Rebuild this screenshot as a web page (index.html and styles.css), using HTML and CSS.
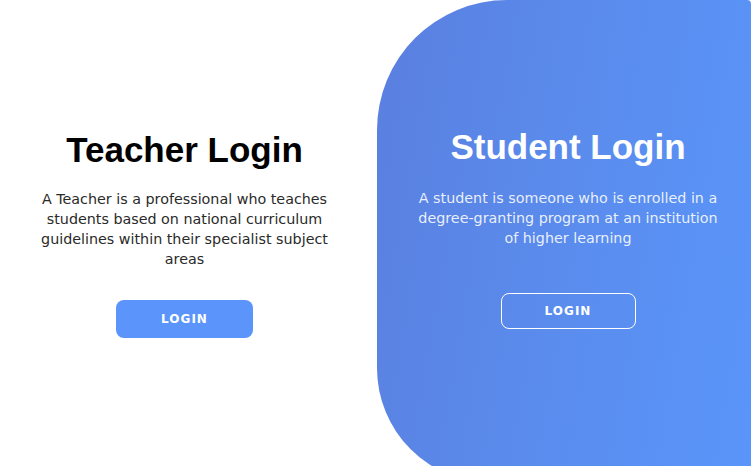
FILE: index.html
```html
<!DOCTYPE html>
<html lang="en">
<head>
<meta charset="utf-8">
<title>Login</title>
<link rel="stylesheet" href="styles.css">
</head>
<body>
<main class="page">
  <section class="side teacher">
    <h1 class="title">Teacher Login</h1>
    <p class="desc">A Teacher is a professional who teaches students based on national curriculum guidelines within their specialist subject areas</p>
    <button class="btn btn-solid" type="button">LOGIN</button>
  </section>
  <section class="side student">
    <h1 class="title">Student Login</h1>
    <p class="desc">A student is someone who is enrolled in a degree-granting program at an institution of higher learning</p>
    <button class="btn btn-ghost" type="button">LOGIN</button>
  </section>
</main>
</body>
</html>
```
FILE: styles.css
```css
* { box-sizing: border-box; }
html, body { margin: 0; padding: 0; background: #fff; }
body { font-family: "DejaVu Sans", sans-serif; }

.page {
  display: flex;
  width: 751px;
  height: 466px;
  overflow: hidden;
  align-items: flex-start;
}

.side {
  display: flex;
  flex-direction: column;
  align-items: center;
  text-align: center;
}

.teacher {
  width: 377px;
  padding-right: 8px;
  padding-top: 130px;
}

.student {
  flex: 1;
  height: 483px;
  padding-left: 8px;
  padding-top: 127px;
  border-radius: 130px 4px 0 115px;
  background: linear-gradient(100deg, #5a7fdf 0%, #5a8ced 50%, #5a95fa 100%);
  color: #fff;
}

.title {
  margin: 0;
  font-family: "Liberation Sans", sans-serif;
  font-weight: 700;
  font-size: 35px;
  line-height: 40px;
  color: #000;
}

.student .title { color: #fff; }

.desc {
  margin: 19px 0 0;
  font-size: 14.3px;
  line-height: 20px;
  color: #2a2a2a;
  width: 300px;
}

.student .desc {
  margin-top: 21px;
  width: 316px;
  color: rgba(255, 255, 255, 0.88);
}

.btn {
  font-family: "DejaVu Sans", sans-serif;
  font-weight: 700;
  font-size: 12px;
  letter-spacing: 1px;
  color: #fff;
  border-radius: 8px;
  cursor: pointer;
}

.btn-solid {
  margin-top: 31px;
  width: 137px;
  height: 38px;
  background: #5b95fb;
  border: none;
}

.btn-ghost {
  margin-top: 45px;
  width: 135px;
  height: 36px;
  background: transparent;
  border: 1px solid #fff;
}
```
